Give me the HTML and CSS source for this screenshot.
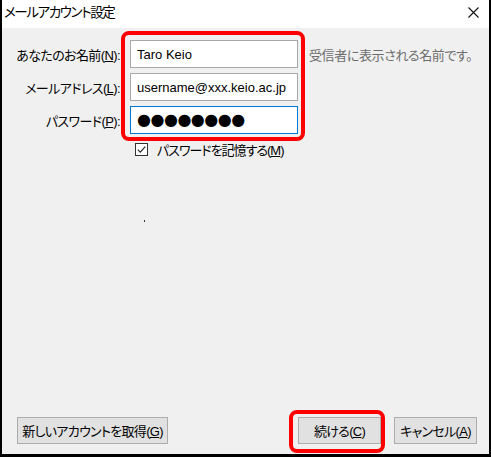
FILE: index.html
```html
<!DOCTYPE html>
<html lang="ja">
<head>
<meta charset="utf-8">
<link rel="stylesheet" href="styles.css">
</head>
<body>
<div class="window">
  <div class="titlebar">
    <span class="title">メールアカウント設定</span>
    <svg class="close" width="11" height="11" viewBox="0 0 11 11"><path d="M0.5 0.5 L10.5 10.5 M10.5 0.5 L0.5 10.5" stroke="#111" stroke-width="1.1" fill="none"/></svg>
  </div>
  <div class="content">
    <div class="form">
      <label class="lbl">あなたのお名前(<u>N</u>):</label>
      <div class="input">Taro Keio</div>
      <span class="hint">受信者に表示される名前です。</span>
      <label class="lbl">メールアドレス(<u>L</u>):</label>
      <div class="input">username@xxx.keio.ac.jp</div>
      <span></span>
      <label class="lbl">パスワード(<u>P</u>):</label>
      <div class="input focus"><span class="pw">●●●●●●●●</span></div>
      <span></span>
    </div>
    <div class="remember">
      <svg class="check" width="13" height="13" viewBox="0 0 13 13"><rect x="0.5" y="0.5" width="12" height="12" fill="#fff" stroke="#333"/><path d="M2.8 6.6 L5.3 9.1 L10.3 3.6" stroke="#222" stroke-width="1.1" fill="none"/></svg>
      <span class="remember-text">パスワードを記憶する(<u>M</u>)</span>
    </div>
    <div class="middle"><span class="dot"></span></div>
    <div class="buttons">
      <button class="btn btn-new">新しいアカウントを取得(<u>G</u>)</button>
      <div class="right">
        <button class="btn btn-small">続ける(<u>C</u>)</button>
        <button class="btn btn-small">キャンセル(<u>A</u>)</button>
      </div>
    </div>
  </div>
  <div class="highlight hl-fields"></div>
  <div class="highlight hl-continue"></div>
</div>
</body>
</html>
```
FILE: styles.css
```css
html, body {
  margin: 0;
  padding: 0;
  background: #000;
}
body {
  font-family: "Liberation Sans", "Noto Sans CJK JP", sans-serif;
  font-size: 13px;
  color: #000;
  font-feature-settings: "palt";
}
.window {
  position: relative;
  width: 491px;
  height: 457px;
  box-sizing: border-box;
  border-left: 2px solid #000;
  border-right: 2px solid #000;
  border-bottom: 3px solid #000;
  background: #f0f0f0;
  display: flex;
  flex-direction: column;
}
.titlebar {
  height: 28px;
  background: #fff;
  display: flex;
  align-items: center;
  justify-content: space-between;
  padding: 0 10px 0 2px;
  flex: none;
}
.title {
  font-size: 13.5px;
  letter-spacing: -1.4px;
  line-height: 1;
  margin-top: -2px;
}
.close {
  display: block;
  margin-top: -4px;
}
.content {
  flex: 1;
  display: flex;
  flex-direction: column;
  padding-top: 12px;
}
.form {
  display: grid;
  grid-template-columns: 118px 168px auto;
  grid-auto-rows: 28px;
  column-gap: 10px;
  row-gap: 5px;
  align-items: center;
}
.form > span:empty { display: block; }
.lbl {
  text-align: right;
  white-space: nowrap;
  letter-spacing: -0.6px;
}
.input {
  height: 28px;
  box-sizing: border-box;
  background: #fff;
  border: 1px solid #a9a9a9;
  display: flex;
  align-items: center;
  padding-left: 6px;
  font-size: 13px;
  white-space: nowrap;
}
.input.focus {
  border-color: #0078d7;
}
.pw {
  font-family: "DejaVu Sans", sans-serif;
  font-size: 16px;
  letter-spacing: -0.5px;
  line-height: 1;
}
.hint {
  color: #6d6d6d;
  margin-left: 1px;
  white-space: nowrap;
  letter-spacing: -0.4px;
}
.remember {
  display: flex;
  align-items: center;
  gap: 9px;
  margin-top: 8px;
  padding-left: 133px;
  height: 15px;
}
.remember-text { letter-spacing: -1px; }
.check { display: block; flex: none; }
.middle {
  flex: 1;
  position: relative;
}
.dot {
  position: absolute;
  left: 142px;
  top: 63px;
  width: 1px;
  height: 2px;
  background: #333;
}
.buttons {
  display: flex;
  justify-content: space-between;
  padding: 0 12px 10px 15px;
}
.right {
  display: flex;
  gap: 13px;
}
.btn {
  height: 27px;
  box-sizing: border-box;
  background: #e1e1e1;
  border: 1px solid #adadad;
  font-family: inherit;
  font-size: 13px;
  font-feature-settings: "palt";
  letter-spacing: -0.7px;
  padding: 0;
  color: #000;
}
.btn-new { width: 151px; }
.btn-small { width: 83px; }
.highlight {
  position: absolute;
  border: 4px solid #f00;
  border-radius: 8px;
  box-sizing: border-box;
}
.hl-fields {
  left: 119px;
  top: 31px;
  width: 184px;
  height: 110px;
}
.hl-continue {
  left: 287px;
  top: 410px;
  width: 96px;
  height: 43px;
}
```
